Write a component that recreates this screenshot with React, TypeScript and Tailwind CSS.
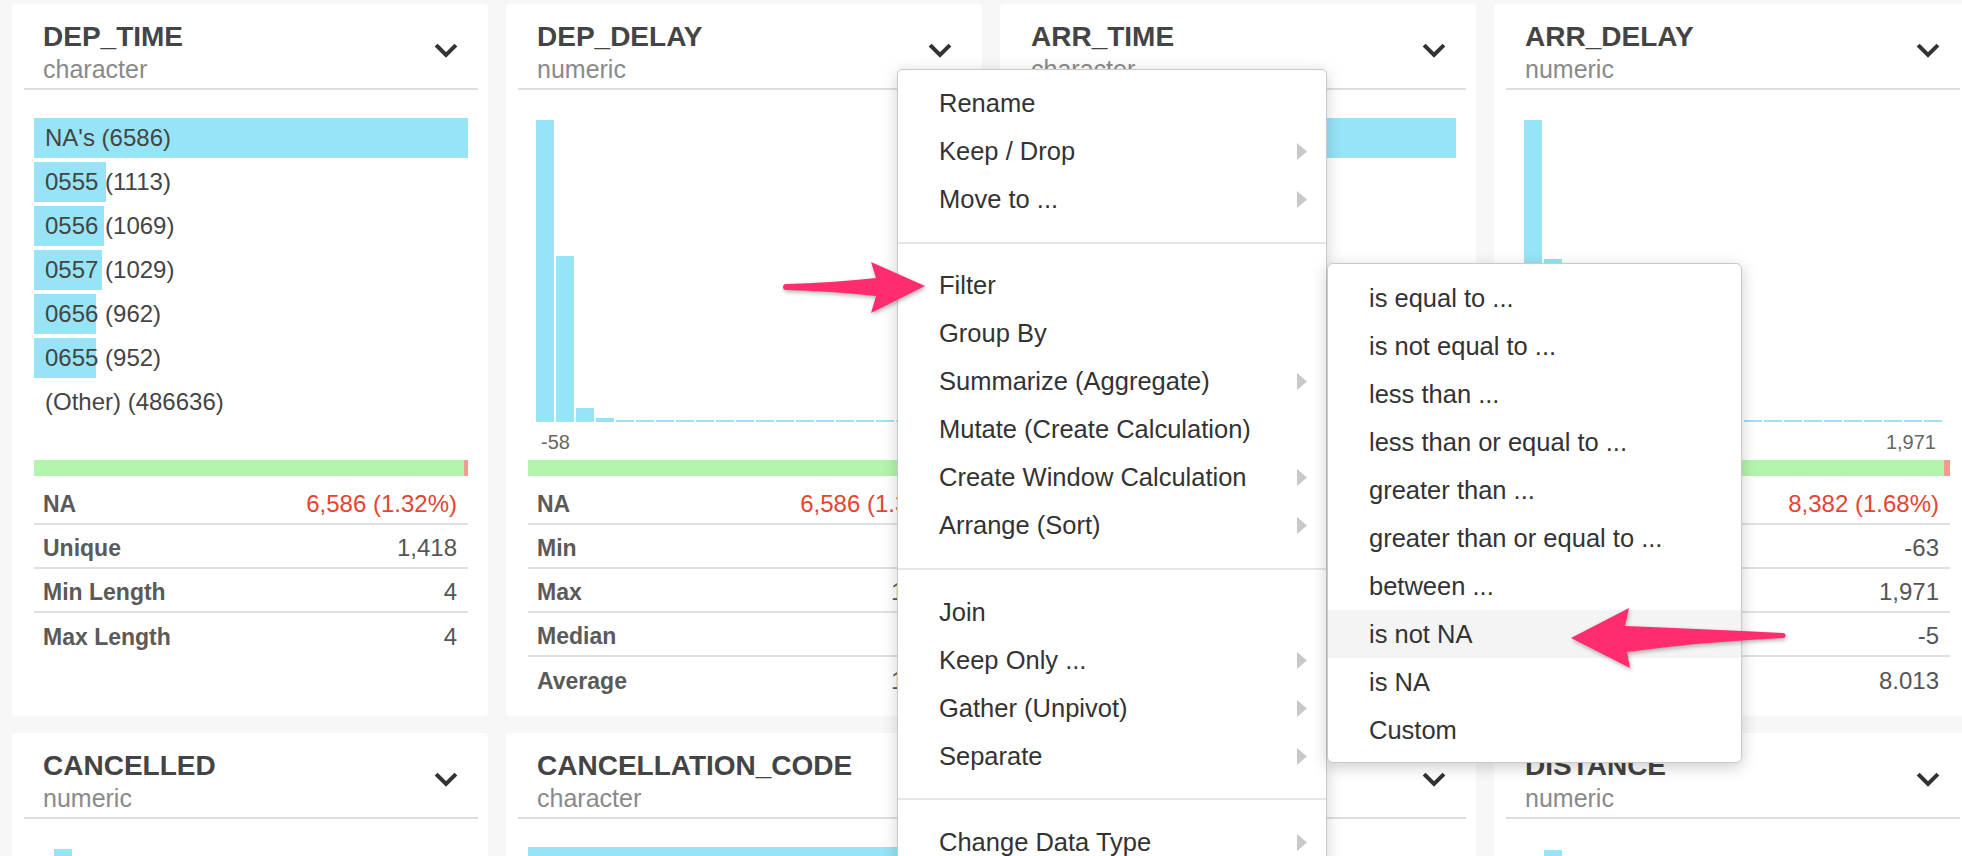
import React from "react";

type CatRow = { label: string; w: number };
type Stat = { label: string; value: string; red?: boolean };
type CardData = {
  name: string;
  type: string;
  kind: "cat" | "hist";
  rows?: CatRow[];
  bins?: number[];
  histPad?: number;
  axis?: [string, string];
  naW: number;
  stats: Stat[];
};

function Chevron() {
  return (
    <svg width="24" height="16" viewBox="0 0 24 16" className="mt-[22px] shrink-0">
      <path d="M3.5 3.5 L12 12 L20.5 3.5" fill="none" stroke="#333" strokeWidth="4" strokeLinecap="square" />
    </svg>
  );
}

function Card({ d }: { d: CardData }) {
  return (
    <div className="h-[712px] rounded-[4px] bg-white">
      <div className="ml-[12px] mr-[10px] flex justify-between border-b-2 border-[#dedede] pb-[4px] pl-[19px] pr-[20px] pt-[17px]">
        <div>
          <div className="text-[28px] font-bold leading-[32px] text-[#444]">{d.name}</div>
          <div className="mt-[1px] text-[25px] leading-[30px] text-[#8a8a8a]">{d.type}</div>
        </div>
        <Chevron />
      </div>
      <div className="pl-[22px] pr-[20px] pt-[28px]">
        {d.kind === "cat" ? (
          <>
            <div className="flex flex-col gap-[4px]">
              {d.rows!.map((r, i) => (
                <div key={i} className="relative h-[40px]">
                  {r.w > 0 && <div className="absolute inset-y-0 left-0 bg-[#97e4f6]" style={{ width: r.w }} />}
                  <span className="relative whitespace-nowrap pl-[11px] text-[24px] leading-[40px] text-[#444]">{r.label}</span>
                </div>
              ))}
            </div>
            <div className="h-[38px]" />
          </>
        ) : (
          <>
            <div className="flex h-[304px] items-end gap-[2px]" style={{ paddingLeft: d.histPad ?? 8 }}>
              {d.bins!.map((h, i) => (
                <div key={i} className="w-[18px] shrink-0 bg-[#97e4f6]" style={{ height: h }} />
              ))}
            </div>
            <div className="mt-[8px] mb-[6px] flex h-[24px] justify-between pl-[13px] pr-[14px] text-[20px] leading-[24px] text-[#666]">
              <span>{d.axis![0]}</span>
              <span>{d.axis![1]}</span>
            </div>
          </>
        )}
        <div className="flex h-[16px]">
          <div className="flex-1 bg-[#b4f5ad]" />
          <div className="bg-[#f59a90]" style={{ width: d.naW }} />
        </div>
        <div className="mt-[5px]">
          {d.stats.map((s, i) => (
            <div
              key={i}
              className={
                "flex h-[44px] items-center justify-between pl-[9px] pr-[11px] pt-[4px] " +
                (i < d.stats.length - 1 ? "border-b-2 border-[#e0e0e0]" : "")
              }
            >
              <span className="text-[23px] font-bold text-[#5a5a5a]">{s.label}</span>
              <span className={"text-[24px] " + (s.red ? "text-[#e8432f]" : "text-[#555]")}>{s.value}</span>
            </div>
          ))}
        </div>
      </div>
    </div>
  );
}

const flat = (n: number, h = 2) => Array.from({ length: n }, () => h);

const cards: CardData[] = [
  {
    name: "DEP_TIME",
    type: "character",
    kind: "cat",
    rows: [
      { label: "NA's (6586)", w: 434 },
      { label: "0555 (1113)", w: 72 },
      { label: "0556 (1069)", w: 70 },
      { label: "0557 (1029)", w: 68 },
      { label: "0656 (962)", w: 62 },
      { label: "0655 (952)", w: 62 },
      { label: "(Other) (486636)", w: 0 },
    ],
    naW: 4,
    stats: [
      { label: "NA", value: "6,586 (1.32%)", red: true },
      { label: "Unique", value: "1,418" },
      { label: "Min Length", value: "4" },
      { label: "Max Length", value: "4" },
    ],
  },
  {
    name: "DEP_DELAY",
    type: "numeric",
    kind: "hist",
    bins: [302, 166, 14, 4, ...flat(17)],
    axis: ["-58", "1,988"],
    naW: 6,
    stats: [
      { label: "NA", value: "6,586 (1.32%)", red: true },
      { label: "Min", value: "-58" },
      { label: "Max", value: "1,988" },
      { label: "Median", value: "-2" },
      { label: "Average", value: "10.43" },
    ],
  },
  {
    name: "ARR_TIME",
    type: "character",
    kind: "cat",
    rows: [
      { label: "NA's (7082)", w: 434 },
      { label: "0704 (872)", w: 54 },
      { label: "0659 (850)", w: 52 },
      { label: "0705 (846)", w: 52 },
      { label: "0700 (844)", w: 52 },
      { label: "0656 (838)", w: 51 },
      { label: "(Other) (487868)", w: 0 },
    ],
    naW: 6,
    stats: [
      { label: "NA", value: "7,082 (1.42%)", red: true },
      { label: "Unique", value: "1,440" },
      { label: "Min Length", value: "4" },
      { label: "Max Length", value: "4" },
    ],
  },
  {
    name: "ARR_DELAY",
    type: "numeric",
    kind: "hist",
    bins: [302, 163, 12, 4, ...flat(17)],
    axis: ["-63", "1,971"],
    naW: 6,
    stats: [
      { label: "NA", value: "8,382 (1.68%)", red: true },
      { label: "Min", value: "-63" },
      { label: "Max", value: "1,971" },
      { label: "Median", value: "-5" },
      { label: "Average", value: "8.013" },
    ],
  },
  {
    name: "CANCELLED",
    type: "numeric",
    kind: "hist",
    bins: [302, ...flat(19, 0), 8],
    histPad: 20,
    axis: ["0", "1"],
    naW: 0,
    stats: [
      { label: "NA", value: "0 (0.00%)" },
      { label: "Min", value: "0" },
      { label: "Max", value: "1" },
    ],
  },
  {
    name: "CANCELLATION_CODE",
    type: "character",
    kind: "cat",
    rows: [
      { label: "NA's (491502)", w: 434 },
      { label: "B (3704)", w: 4 },
      { label: "A (2788)", w: 3 },
      { label: "C (1054)", w: 2 },
    ],
    naW: 0,
    stats: [{ label: "NA", value: "491,502 (98.5%)", red: true }],
  },
  {
    name: "DIVERTED",
    type: "numeric",
    kind: "hist",
    bins: [302, ...flat(20, 0)],
    axis: ["0", "1"],
    naW: 0,
    stats: [{ label: "NA", value: "0 (0.00%)" }],
  },
  {
    name: "DISTANCE",
    type: "numeric",
    kind: "hist",
    bins: [40, 301, 160, 90, 60, 30, 20, 10, 6, ...flat(12)],
    axis: ["31", "4,983"],
    naW: 0,
    stats: [{ label: "NA", value: "0 (0.00%)" }],
  },
];

type MenuItem = { label: string; sub?: boolean };
const groups: MenuItem[][] = [
  [{ label: "Rename" }, { label: "Keep / Drop", sub: true }, { label: "Move to ...", sub: true }],
  [
    { label: "Filter" },
    { label: "Group By" },
    { label: "Summarize (Aggregate)", sub: true },
    { label: "Mutate (Create Calculation)" },
    { label: "Create Window Calculation", sub: true },
    { label: "Arrange (Sort)", sub: true },
  ],
  [
    { label: "Join" },
    { label: "Keep Only ...", sub: true },
    { label: "Gather (Unpivot)", sub: true },
    { label: "Separate", sub: true },
  ],
  [{ label: "Change Data Type", sub: true }, { label: "Convert", sub: true }],
];

const subItems = [
  "is equal to ...",
  "is not equal to ...",
  "less than ...",
  "less than or equal to ...",
  "greater than ...",
  "greater than or equal to ...",
  "between ...",
  "is not NA",
  "is NA",
  "Custom",
];

function Tri() {
  return (
    <svg width="10" height="17" viewBox="0 0 10 17" className="shrink-0">
      <polygon points="0,0 10,8.5 0,17" fill="#c8c8c8" />
    </svg>
  );
}

export default function App() {
  return (
    <div
      className="relative h-[856px] w-[1962px] overflow-hidden bg-[#f7f7f7]"
      style={{ fontFamily: '"Liberation Sans", Arial, Helvetica, sans-serif' }}
    >
      <div className="grid grid-cols-[repeat(4,476px)] gap-x-[18px] gap-y-[17px] pl-[12px] pt-[4px]">
        {cards.map((c, i) => (
          <Card key={i} d={c} />
        ))}
      </div>

      {/* main context menu */}
      <div className="absolute left-[897px] top-[69px] w-[430px] rounded-[5px] border border-[#c9c9c9] bg-white text-[25.5px] text-[#333] shadow-[0_3px_16px_rgba(0,0,0,0.18)]">
        {groups.map((g, gi) => (
          <div
            key={gi}
            className={
              gi === 0
                ? "pt-[9px] pb-[19px]"
                : gi === 1
                ? "border-t-2 border-[#e6e6e6] pt-[17px] pb-[19px]"
                : "border-t-2 border-[#e6e6e6] pt-[18px] pb-[18px]"
            }
          >
            {g.map((it, ii) => (
              <div key={ii} className="flex h-[48px] items-center justify-between pl-[41px] pr-[19px]">
                <span className="whitespace-nowrap">{it.label}</span>
                {it.sub && <Tri />}
              </div>
            ))}
          </div>
        ))}
      </div>

      {/* filter submenu */}
      <div className="absolute left-[1327px] top-[263px] w-[415px] rounded-[6px] border border-[#c9c9c9] bg-white pt-[10px] pb-[8px] text-[25.5px] text-[#333] shadow-[0_4px_16px_rgba(0,0,0,0.2)]">
        {subItems.map((s, i) => (
          <div key={i} className={"flex h-[48px] items-center pl-[41px] " + (i === 7 ? "bg-[#f4f4f4]" : "")}>
            <span className="whitespace-nowrap">{s}</span>
          </div>
        ))}
      </div>

      {/* annotation arrows */}
      <svg
        className="pointer-events-none absolute left-0 top-0"
        width="1962"
        height="856"
        viewBox="0 0 1962 856"
        style={{ filter: "drop-shadow(1px 2px 2px rgba(0,0,0,0.3))" }}
      >
        <path
          d="M786 284 Q830 283 876 278 L871 262 L925 286 L871 313 L876 296 Q830 291 786 290 A3 3 0 0 1 786 284 Z"
          fill="#ff2d6e"
        />
        <path
          d="M1571 638 L1629 608 L1625 626 Q1700 629 1783 633 A2.5 2.5 0 0 1 1783 638 Q1700 642 1627 652 L1630 668 Z"
          fill="#ff2d6e"
        />
      </svg>
    </div>
  );
}
